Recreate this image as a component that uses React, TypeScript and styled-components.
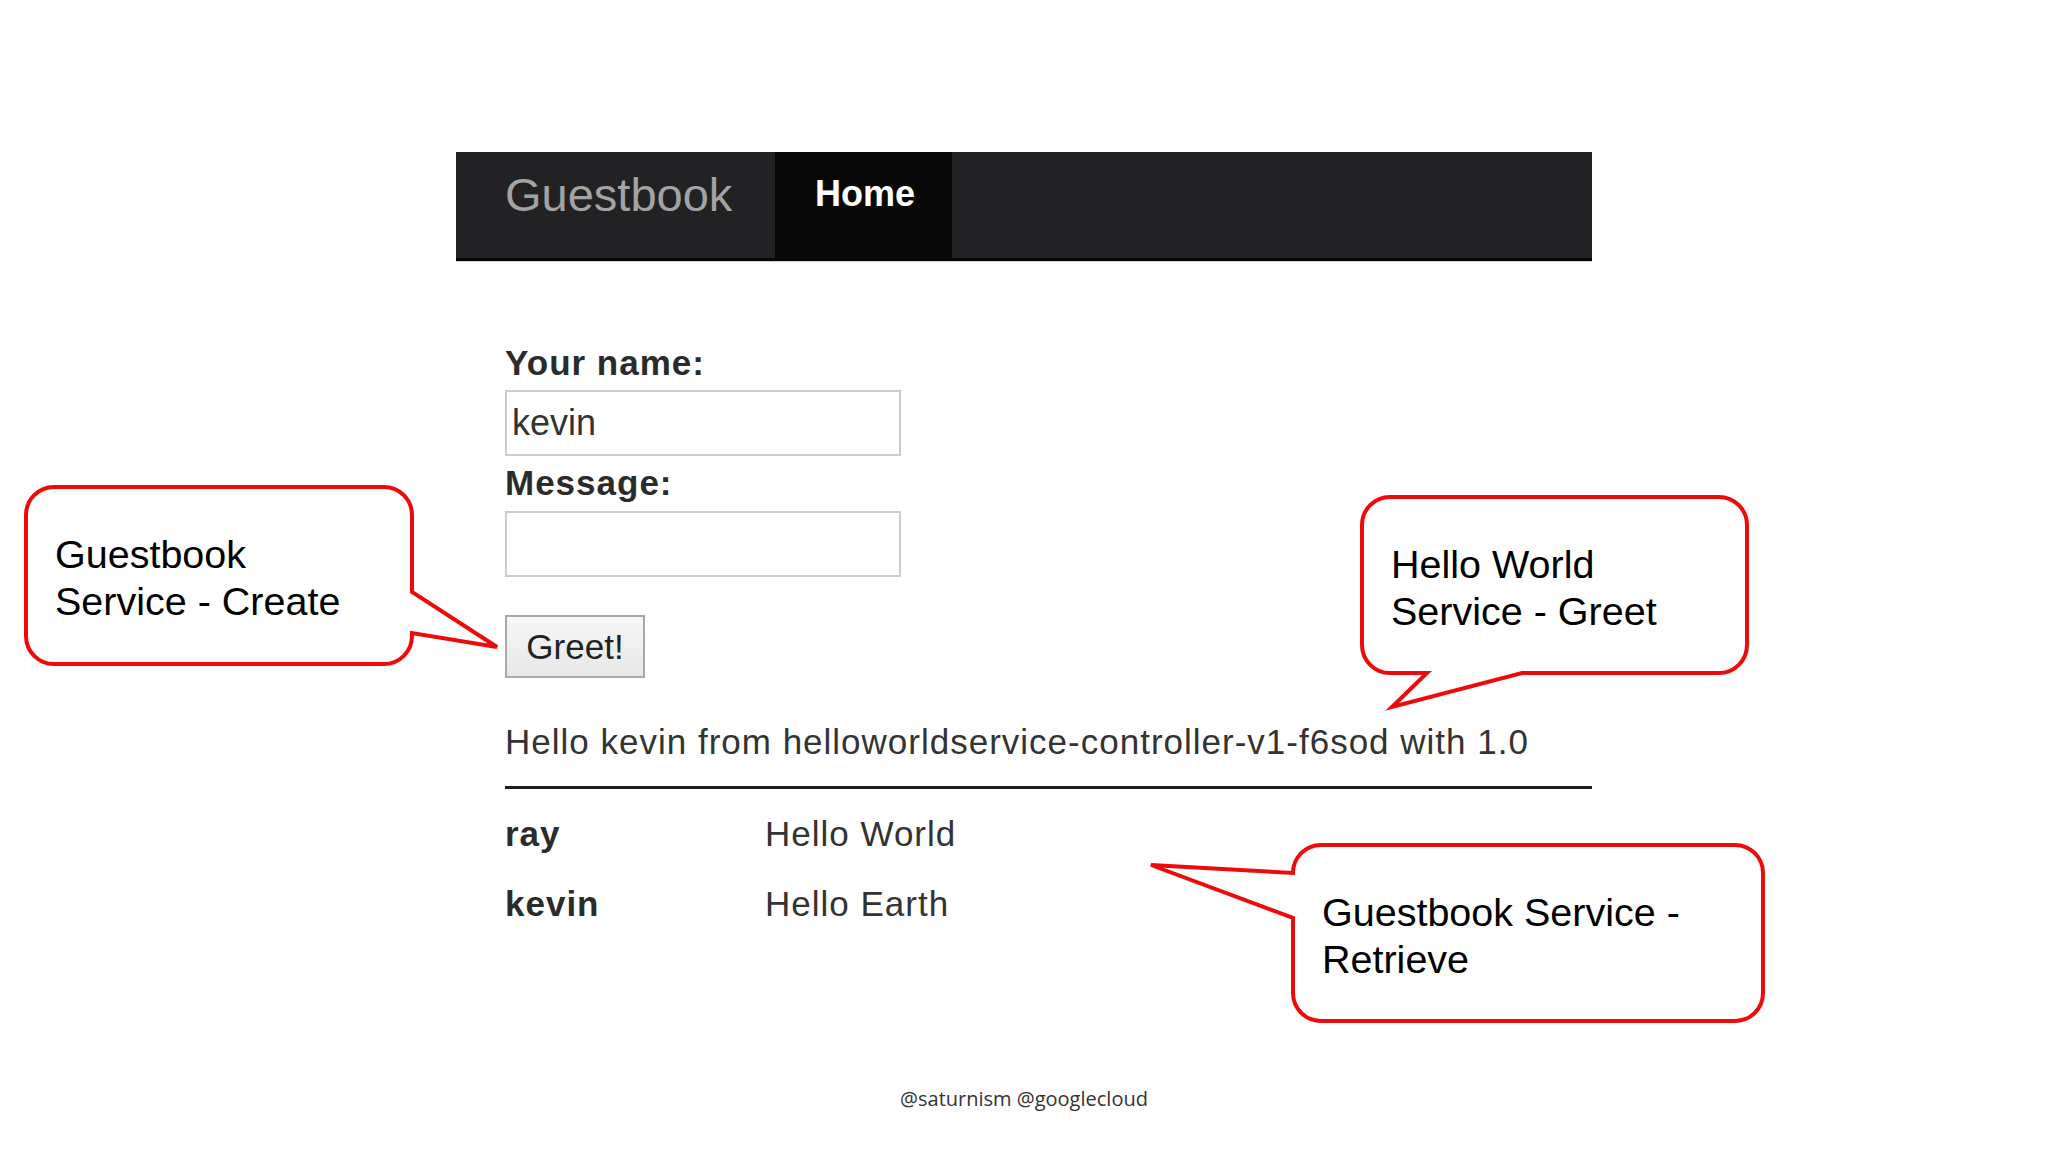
import styled, { createGlobalStyle } from "styled-components";

const Global = createGlobalStyle`
  html, body {
    margin: 0;
    padding: 0;
    background: #ffffff;
  }
  body {
    font-family: "Liberation Sans", Arial, Helvetica, sans-serif;
  }
  * {
    box-sizing: border-box;
  }
`;

interface Note {
  left: number;
  top: number;
  width: number;
  height: number;
  path: string;
  lines: string[];
}

const notes: Note[] = [
  {
    left: 26,
    top: 487,
    width: 386,
    height: 177,
    path: "M28,0 H358 A28,28 0 0 1 386,28 V105 L471,160 L386,146 V149 A28,28 0 0 1 358,177 H28 A28,28 0 0 1 0,149 V28 A28,28 0 0 1 28,0 Z",
    lines: ["Guestbook", "Service - Create"],
  },
  {
    left: 1362,
    top: 497,
    width: 385,
    height: 176,
    path: "M28,0 H357 A28,28 0 0 1 385,28 V148 A28,28 0 0 1 357,176 H160 L30,210 L65,176 H28 A28,28 0 0 1 0,148 V28 A28,28 0 0 1 28,0 Z",
    lines: ["Hello World", "Service - Greet"],
  },
  {
    left: 1293,
    top: 845,
    width: 470,
    height: 176,
    path: "M28,0 H442 A28,28 0 0 1 470,28 V148 A28,28 0 0 1 442,176 H28 A28,28 0 0 1 0,148 V73 L-142,20 L0,28 A28,28 0 0 1 28,0 Z",
    lines: ["Guestbook Service -", "Retrieve"],
  },
];

const entries = [
  { name: "ray", message: "Hello World" },
  { name: "kevin", message: "Hello Earth" },
];

const App = () => {
  return (
    <>
      <Global />
      <Slide>
        <Page>
          <NavBar>
            <Brand>Guestbook</Brand>
            <NavItem $active>Home</NavItem>
          </NavBar>
          <Content>
            <Form onSubmit={(e) => e.preventDefault()}>
              <Label htmlFor="name">Your name:</Label>
              <TextInput id="name" defaultValue="kevin" />
              <Label htmlFor="message" $gap={3}>
                Message:
              </Label>
              <TextInput id="message" />
              <GreetButton type="submit">Greet!</GreetButton>
            </Form>
            <Greeting>
              Hello kevin from helloworldservice-controller-v1-f6sod with 1.0
            </Greeting>
            <Rule />
            <Entries>
              {entries.map((entry) => (
                <Entry key={entry.name}>
                  <Name>{entry.name}</Name>
                  <span>{entry.message}</span>
                </Entry>
              ))}
            </Entries>
          </Content>
        </Page>
        <Footer>@saturnism @googlecloud</Footer>
        {notes.map((note) => (
          <Callout
            key={note.lines[0] + note.lines[1]}
            style={{
              left: note.left,
              top: note.top,
              width: note.width,
              height: note.height,
            }}
          >
            <Bubble width={note.width} height={note.height}>
              <path d={note.path} />
            </Bubble>
            <CalloutText>
              {note.lines.map((line) => (
                <div key={line}>{line}</div>
              ))}
            </CalloutText>
          </Callout>
        ))}
      </Slide>
    </>
  );
};

export default App;

const Slide = styled.div`
  position: relative;
  width: 2048px;
  height: 1152px;
  display: flex;
  flex-direction: column;
  overflow: hidden;
  background: #ffffff;
`;

const Page = styled.div`
  margin-left: 456px;
  width: 1136px;
  padding-top: 152px;
`;

const NavBar = styled.nav`
  display: flex;
  height: 109px;
  background: #222224;
  border-bottom: 3px solid #080808;
  box-shadow: 0 1px 0 #cfcfcf;
`;

const Brand = styled.div`
  width: 319px;
  flex-shrink: 0;
  padding: 19px 0 0 49px;
  font-size: 47px;
  line-height: 1;
  color: #a3a3a3;
`;

const NavItem = styled.div<{ $active?: boolean }>`
  width: 177px;
  padding: 24px 0 0 40px;
  font-size: 36px;
  font-weight: bold;
  line-height: 1;
  color: ${(p) => (p.$active ? "#ffffff" : "#a3a3a3")};
  background: ${(p) => (p.$active ? "#080808" : "transparent")};
`;

const Content = styled.div`
  padding-left: 49px;
  color: #333333;
  font-size: 35px;
  line-height: 50px;
  letter-spacing: 1px;
`;

const Form = styled.form`
  display: flex;
  flex-direction: column;
  align-items: flex-start;
  padding-top: 77px;
`;

const Label = styled.label<{ $gap?: number }>`
  display: block;
  margin: ${(p) => (p.$gap ? "2px" : "0")} 0 ${(p) => p.$gap ?? 2}px 0;
  font-weight: bold;
  color: #2b2b2b;
`;

const TextInput = styled.input`
  width: 396px;
  height: 66px;
  margin: 0;
  padding: 0 5px;
  border: 2px solid #cccccc;
  border-radius: 0;
  outline: none;
  background: #ffffff;
  font-family: "Liberation Sans", Arial, sans-serif;
  font-size: 36px;
  color: #333333;
`;

const GreetButton = styled.button`
  width: 140px;
  height: 63px;
  margin-top: 38px;
  padding: 0;
  border: 2px solid #a8a8a8;
  border-radius: 0;
  background: linear-gradient(#f7f7f7, #e7e7e7);
  font-family: "Liberation Sans", Arial, sans-serif;
  font-size: 35px;
  color: #222222;
`;

const Greeting = styled.p`
  margin: 39px 0 0 0;
`;

const Rule = styled.hr`
  margin: 19px 0 10px 0;
  border: none;
  height: 3px;
  background: #1e1e1e;
`;

const Entries = styled.div`
  display: flex;
  flex-direction: column;
`;

const Entry = styled.div`
  display: grid;
  grid-template-columns: 260px 1fr;
  padding: 10px 0;
`;

const Name = styled.span`
  font-weight: bold;
  color: #2b2b2b;
`;

const Footer = styled.footer`
  margin-top: auto;
  padding-bottom: 39px;
  text-align: center;
  font-family: "Open Sans", "Liberation Sans", sans-serif;
  font-size: 20px;
  line-height: 28px;
  color: #333333;
`;

const Callout = styled.div`
  position: absolute;
  z-index: 2;
`;

const Bubble = styled.svg`
  position: absolute;
  left: 0;
  top: 0;
  overflow: visible;

  path {
    fill: #ffffff;
    stroke: #ee0a0a;
    stroke-width: 4;
    stroke-linejoin: miter;
  }
`;

const CalloutText = styled.div`
  position: relative;
  padding: 44px 0 0 29px;
  font-family: "Liberation Sans", Arial, sans-serif;
  font-size: 39.5px;
  line-height: 47px;
  color: #000000;
  white-space: nowrap;
`;
